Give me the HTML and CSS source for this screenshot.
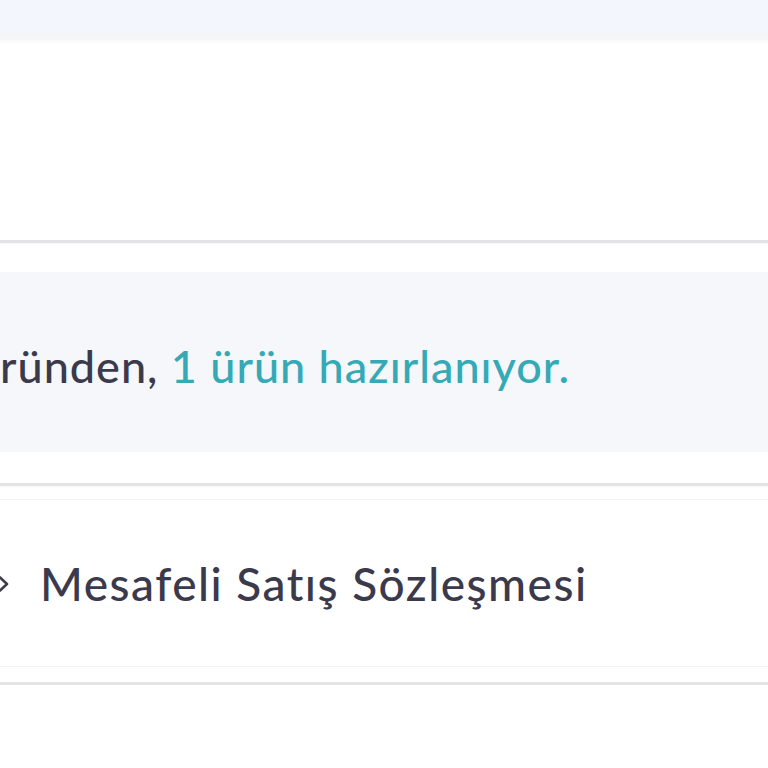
FILE: index.html
```html
<!DOCTYPE html>
<html lang="tr">
<head>
<meta charset="utf-8">
<link rel="stylesheet" href="styles.css">
</head>
<body>
<div class="page">
  <div class="topbar"></div>
  <div class="topshadow"></div>
  <div class="header-space"></div>
  <div class="divider"></div>
  <div class="gap-a"></div>
  <div class="notice">
    <p class="notice-text">ründen, <span class="accent">1 ürün hazırlanıyor.</span></p>
  </div>
  <div class="gap-b"></div>
  <div class="divider"></div>
  <div class="links">
    <div class="link-card">
      <svg class="chev" width="10" height="16" viewBox="0 0 10 16"><path d="M1 1.5 L8 8 L1 14.5" fill="none" stroke="#3d3d4a" stroke-width="2.6" stroke-linecap="round" stroke-linejoin="round"/></svg>
      <span class="link-text">Mesafeli Satış Sözleşmesi</span>
    </div>
  </div>
  <div class="divider"></div>
</div>
</body>
</html>
```
FILE: styles.css
```css
html, body {
  margin: 0;
  padding: 0;
  background: #ffffff;
}
.page {
  width: 768px;
  overflow: hidden;
  font-family: "Lato", "Noto Sans", sans-serif;
}
.topbar {
  height: 32px;
  background: #f3f6fc;
}
.topshadow {
  height: 13px;
  background: linear-gradient(#f4f5f8, #f6f6f6 50%, #ffffff);
}
.header-space {
  height: 195px;
}
.divider {
  height: 3px;
  background: #e4e4e6;
  box-shadow: 0 1px 2px rgba(0,0,0,0.04);
}
.gap-a {
  height: 29px;
}
.notice {
  height: 180px;
  background: #f6f7fa;
  display: flex;
  align-items: center;
}
.notice-text {
  margin: 0;
  padding-top: 8px;
  font-size: 45px;
  font-weight: 500;
  color: #3a3a4c;
  white-space: nowrap;
  letter-spacing: 1px;
}
.accent {
  color: #35aab6;
}
.gap-b {
  height: 31px;
}
.links {
  padding: 13px 0 15px;
}
.link-card {
  height: 166px;
  border-top: 1px solid #f3f3f5;
  border-bottom: 1px solid #f3f3f5;
  display: flex;
  align-items: center;
  gap: 31px;
}
.chev {
  flex: none;
  margin-left: -1px;
  margin-top: 2px;
}
.link-text {
  font-size: 46px;
  font-weight: 500;
  color: #3a3a4c;
  letter-spacing: 1.5px;
  white-space: nowrap;
}
```
